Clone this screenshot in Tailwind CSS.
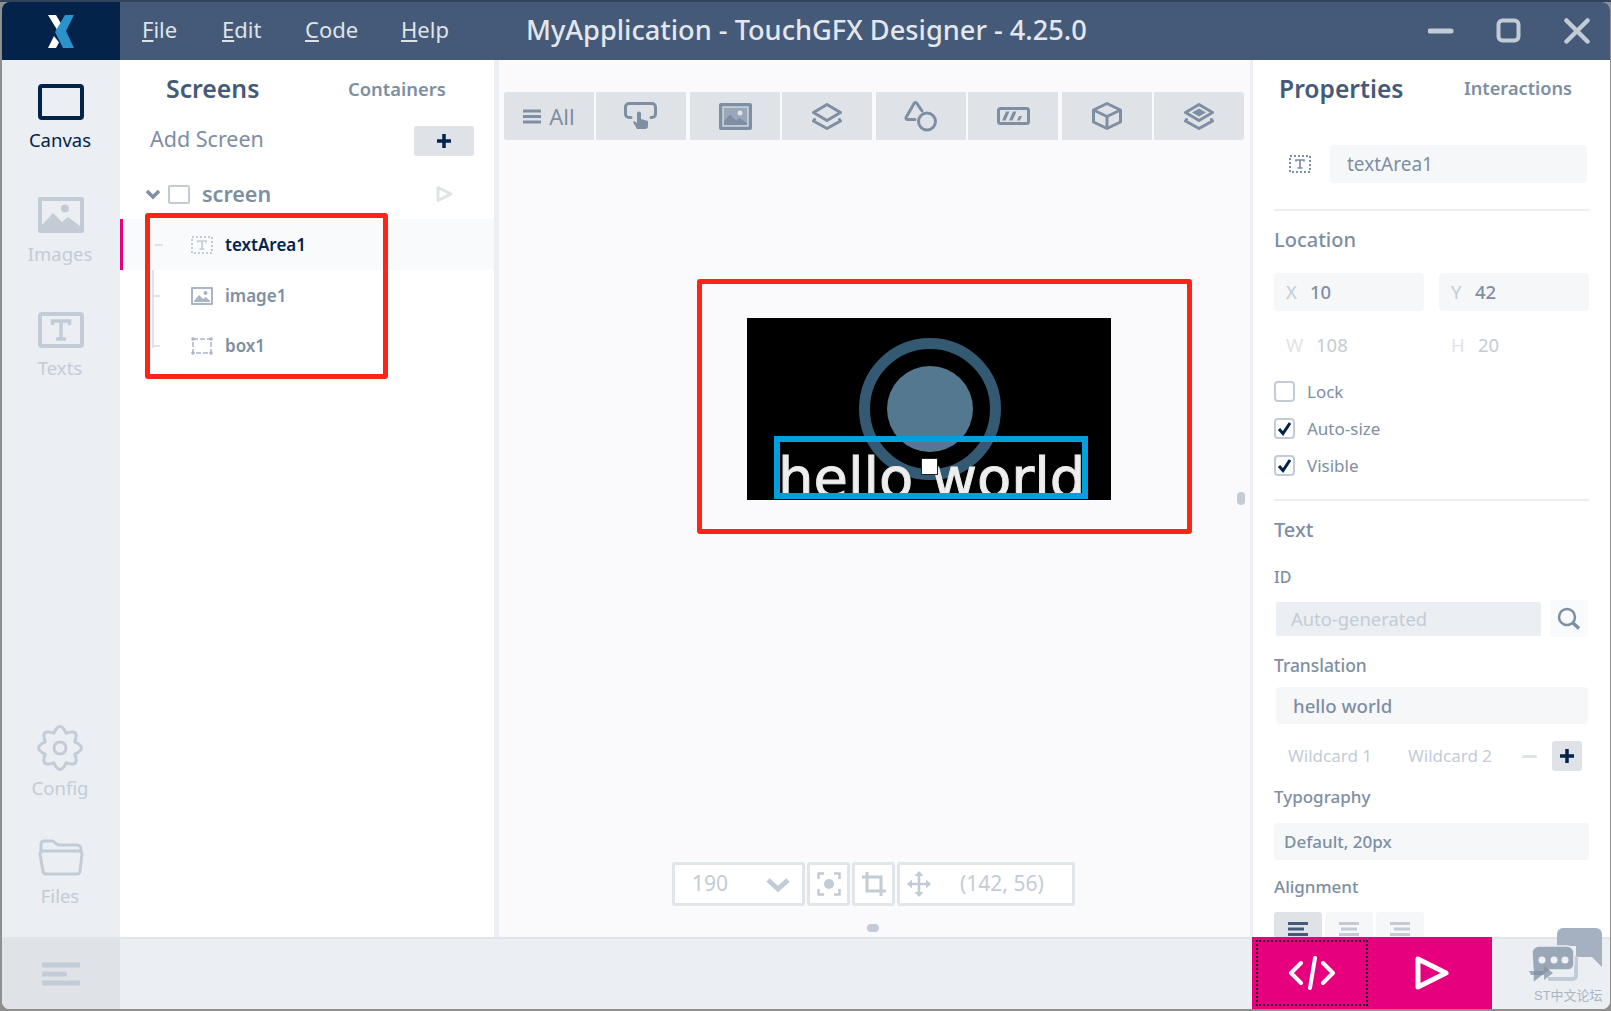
<!DOCTYPE html>
<html><head><meta charset="utf-8"><script src="https://cdn.jsdelivr.net/npm/@tailwindcss/browser@4"></script></head>
<body class="m-0 overflow-hidden bg-[#9a9a9a]">
<div class="relative w-[1611px] h-[1011px] overflow-hidden bg-[#8f8f8f] border-t-2 border-t-[#33445a] pl-[2px] pr-px pb-[2px] font-['Noto_Sans',sans-serif] text-[#7e8ea3]">
<div class="relative flex flex-col h-full overflow-hidden rounded-t-[8px] rounded-b-[8px] bg-white">

<!-- header -->
<header class="flex h-[58px] shrink-0 bg-[#455a78] text-[#dfe3e8]">
  <div class="flex w-[118px] shrink-0 items-center justify-center bg-[#03234b]">
    <svg width="26" height="33" viewBox="0 0 26 33"><path d="M0 0h8l7 12-4 6zM0 33l6-12 5 6.500L8 33z" fill="#fff"/><path d="M17 0h9l-8 16 8 17H15L7 17z" fill="#2b93cb"/></svg>
  </div>
  <nav class="flex items-center pb-[3px] pl-[22px] text-[22px] text-[#dfe3e8]">
    <span class="w-[80px]"><u class="underline-offset-2">F</u>ile</span><span class="w-[83px]"><u class="underline-offset-2">E</u>dit</span><span class="w-[96px]"><u class="underline-offset-2">C</u>ode</span><span><u class="underline-offset-2">H</u>elp</span>
  </nav>
  <div class="ml-[77px] flex items-center pb-[1px] text-[27.2px] font-medium text-[#e3e7eb]">MyApplication - TouchGFX Designer - 4.25.0</div>
  <div class="ml-auto flex items-center gap-[42px] pr-[20px]">
    <svg width="26" height="26" viewBox="0 0 26 26"><path d="M2 13h21" stroke="#c3ccd6" stroke-width="5" stroke-linecap="round"/></svg>
    <svg width="26" height="26" viewBox="0 0 26 26"><rect x="2.500" y="2.500" width="20" height="20" rx="4" fill="none" stroke="#c3ccd6" stroke-width="4"/></svg>
    <svg width="26" height="26" viewBox="0 0 26 26"><path d="M2.500 2.500l21 21M23.500 2.500l-21 21" stroke="#c3ccd6" stroke-width="4.500" stroke-linecap="round"/></svg>
  </div>
</header>

<!-- body -->
<div class="flex min-h-0 flex-1">
  <!-- sidebar -->
  <aside class="flex w-[118px] shrink-0 flex-col items-center bg-[#ebeef2] pr-[2px] pt-[24px] text-[18.5px] text-[#c3ccd6]">
    <svg class="ml-[2px]" width="46" height="36" viewBox="0 0 46 36"><rect x="2" y="2" width="42" height="32" rx="2" fill="#ebeef2" stroke="#03234b" stroke-width="4"/></svg>
    <span class="mt-[5px] leading-[30px] text-[#03234b]">Canvas</span>
    <svg class="ml-[2px] mt-[42px]" width="46" height="36" viewBox="0 0 46 36"><rect width="46" height="36" rx="2" fill="#c3ccd6"/><rect x="4" y="4" width="38" height="28" fill="#ebeef2"/><circle cx="27" cy="11.500" r="4" fill="#c3ccd6"/><path d="M4 28l11-12 9 9 6-5 12 9v3H4z" fill="#c3ccd6"/></svg>
    <span class="mt-[6px] leading-[30px]">Images</span>
    <svg class="ml-[2px] mt-[43px]" width="46" height="36" viewBox="0 0 46 36"><rect x="2" y="2" width="42" height="32" rx="2" fill="none" stroke="#c3ccd6" stroke-width="4"/><path d="M14.500 13v-4h17v4M23 9v18M18 27h10" fill="none" stroke="#c3ccd6" stroke-width="3.500"/></svg>
    <span class="mt-[5px] leading-[30px]">Texts</span>
    <div class="flex-1"></div>
    <svg width="46" height="46" viewBox="0 0 46 46" fill="none" stroke="#c3ccd6" stroke-width="3" stroke-linejoin="round"><circle cx="23" cy="23" r="6"/><path d="M37.800 16.900Q51 23 37.800 29.100Q42.800 42.800 29.100 37.800Q23 51 16.900 37.800Q3.200 42.800 8.200 29.100Q-5 23 8.200 16.900Q3.200 3.200 16.900 8.200Q23 -5 29.100 8.200Q42.800 3.200 37.800 16.900Z"/></svg>
    <span class="mt-[2px] leading-[30px]">Config</span>
    <svg class="ml-[2px] mt-[36px]" width="46" height="37" viewBox="0 0 46 37" fill="none" stroke="#c3ccd6" stroke-width="3"><path d="M3 12V5a3 3 0 0 1 3-3h8c3 0 3 4 7 4h18a4 4 0 0 1 4 4v2"/><path d="M2 15a3 3 0 0 1 3-3h36a3 3 0 0 1 3 3l-2 17a3 3 0 0 1-3 3H8a3 3 0 0 1-3-3z"/></svg>
    <span class="mb-[26px] mt-[5px] leading-[30px]">Files</span>
  </aside>

  <!-- screens panel -->
  <section class="relative w-[374px] shrink-0 bg-white">
    <div class="flex h-[49px] items-center pl-[46px] pt-[9px]">
      <span class="w-[182px] text-[24.800px] font-semibold text-[#455a78]">Screens</span>
      <span class="text-[18.400px] font-semibold text-[#7e8ea3]">Containers</span>
    </div>
    <div class="mt-[17px] flex h-[30px] items-center justify-between pl-[30px] pr-[20px]">
      <span class="pb-[3px] text-[21.500px] text-[#7e8ea3]">Add Screen</span>
      <span class="flex h-[30px] w-[60px] items-center justify-center rounded-[3px] bg-[#dfe3e8]"><svg width="16" height="16" viewBox="0 0 16 16"><path d="M8 1v14M1 8h14" stroke="#03234b" stroke-width="3.500"/></svg></span>
    </div>
    <div class="mt-[20px] flex h-[36px] items-center pl-[25px]">
      <svg width="16" height="11" viewBox="0 0 16 11"><path d="M2 2l6 6 6-6" fill="none" stroke="#7e8ea3" stroke-width="3.500"/></svg>
      <span class="ml-[7px] h-[19px] w-[22px] rounded-[2px] border-2 border-[#c3ccd6]"></span>
      <span class="ml-[12px] text-[21.500px] font-semibold text-[#7e8ea3]">screen</span>
      <svg class="ml-auto mr-[40px]" width="18" height="18" viewBox="0 0 18 18"><path d="M2 2.500v13l13-6.500z" fill="none" stroke="#dfe3e8" stroke-width="3" stroke-linejoin="round"/></svg>
    </div>
    <div class="relative mt-[7px]">
      <div class="absolute left-[32px] top-0 h-[129px] w-[10px] border-l-2 border-[#dfe3e8]"></div>
      <div class="relative flex h-[51px] items-center border-l-[3px] border-[#e6007e] bg-[#f9fafc] pl-[68px]">
        <svg width="22" height="18" viewBox="0 0 22 18" fill="none"><rect x="1" y="1" width="20" height="16" stroke="#c3ccd6" stroke-width="2" stroke-dasharray="2 2"/><path d="M7 6.500V5h8v1.500M11 5v8M8.500 13h5" stroke="#c3ccd6" stroke-width="1.700"/></svg>
        <span class="ml-[12px] text-[17px] font-semibold text-[#03234b]">textArea1</span>
        <span class="absolute left-[32px] top-[25px] h-[2px] w-[8px] bg-[#dfe3e8]"></span>
      </div>
      <div class="relative flex h-[51px] items-center pl-[71px]">
        <svg width="22" height="18" viewBox="0 0 22 18"><rect width="22" height="18" rx="1" fill="#a9b5c4"/><rect x="2" y="2" width="18" height="14" fill="#fff"/><circle cx="14.500" cy="6" r="2" fill="#a9b5c4"/><path d="M3 14l5-6 4 4 3-2 4 4v1H3z" fill="#a9b5c4"/></svg>
        <span class="ml-[12px] text-[17px] font-semibold text-[#7e8ea3]">image1</span>
        <span class="absolute left-[32px] top-[25px] h-[2px] w-[8px] bg-[#dfe3e8]"></span>
      </div>
      <div class="relative flex h-[50px] items-center pl-[71px]">
        <svg width="22" height="18" viewBox="0 0 22 18" fill="none"><rect x="2" y="2" width="18" height="14" stroke="#a9b5c4" stroke-width="1.500" stroke-dasharray="5 2"/><circle cx="2" cy="2" r="1.800" fill="#a9b5c4"/><circle cx="20" cy="2" r="1.800" fill="#a9b5c4"/><circle cx="2" cy="16" r="1.800" fill="#a9b5c4"/><circle cx="20" cy="16" r="1.800" fill="#a9b5c4"/></svg>
        <span class="ml-[12px] text-[17px] font-semibold text-[#7e8ea3]">box1</span>
        <span class="absolute left-[32px] top-[24px] h-[2px] w-[8px] bg-[#dfe3e8]"></span>
      </div>
    </div>
  </section>
  <div class="w-[5px] shrink-0 bg-[#ebeef2]"></div>

  <!-- canvas -->
  <main class="relative w-[751px] shrink-0 bg-[#fafafc]">
    <div class="ml-[5px] mt-[32px] flex h-[48px] w-[740px] overflow-hidden rounded-[3px] text-[#7e8ea3]">
      <div class="flex w-[90px] items-center justify-center gap-[8px] bg-[#dfe3e8] text-[22px]"><svg width="18" height="15" viewBox="0 0 18 15"><path d="M0 2h18M0 7.500h18M0 13h18" stroke="#7e8ea3" stroke-width="3"/></svg>All</div>
      <div class="ml-[2px] flex w-[90px] items-center justify-center bg-[#dfe3e8]"><svg width="34" height="28" viewBox="0 0 34 28" fill="none" stroke="#7e8ea3" stroke-width="3" stroke-linecap="round"><path d="M7 15.500H5A3.500 3.500 0 0 1 1.500 12V5A3.500 3.500 0 0 1 5 1.500h23A3.500 3.500 0 0 1 31.500 5v7a3.500 3.500 0 0 1-3.500 3.500h-1"/><path d="M13 11.500a2 2 0 0 1 4 0v5.500l7 2v5a3 3 0 0 1-3 3h-8l-4-7 1-1 3 2z" fill="#7e8ea3" stroke="none"/></svg></div>
      <div class="ml-[4px] flex w-[90px] items-center justify-center bg-[#dfe3e8]"><svg width="33" height="27" viewBox="0 0 33 27"><rect width="33" height="27" rx="2" fill="#7e8ea3"/><rect x="4" y="4" width="25" height="19" fill="#9aa7b8" stroke="#dfe3e8" stroke-width="1.200"/><circle cx="21" cy="10" r="2.500" fill="#dfe3e8"/><path d="M5 22v-4l6-6.500 6 6 3.500-2.500 7.500 5v2z" fill="#7e8ea3"/></svg></div>
      <div class="ml-[2px] flex w-[90px] items-center justify-center bg-[#dfe3e8]"><svg width="30" height="27" viewBox="0 0 30 27" fill="none" stroke="#7e8ea3" stroke-width="3" stroke-linejoin="round" stroke-linecap="round"><path d="M15 1.500l13.500 8-13.500 8-13.500-8z"/><path d="M2.500 16.500L1.500 18l13.500 7.500L28.500 18l-1-1.500"/></svg></div>
      <div class="ml-[4px] flex w-[90px] items-center justify-center bg-[#dfe3e8]"><svg width="34" height="31" viewBox="0 0 34 31" fill="none" stroke="#7e8ea3" stroke-width="3" stroke-linejoin="round" stroke-linecap="round"><path d="M11 18.500H3.500a1.500 1.500 0 0 1-1.300-2.300L10 2.500a1.700 1.700 0 0 1 3 0l5 7.500"/><circle cx="23" cy="20.500" r="8.500"/></svg></div>
      <div class="ml-[2px] flex w-[90px] items-center justify-center bg-[#dfe3e8]"><svg width="33" height="18" viewBox="0 0 33 18"><rect x="1.500" y="1.500" width="30" height="15" rx="2" fill="none" stroke="#7e8ea3" stroke-width="3"/><path d="M5 13.500l4-9h3.500l-4 9zM12 13.500l4-9h3.500l-4 9zM20 13.500l2-4.500h3l-2 4.500z" fill="#7e8ea3"/></svg></div>
      <div class="ml-[4px] flex w-[90px] items-center justify-center bg-[#dfe3e8]"><svg width="30" height="28" viewBox="0 0 30 28" fill="none" stroke="#7e8ea3" stroke-width="3" stroke-linejoin="round"><path d="M15 1.500l13.500 6.500v12l-13.500 6.500-13.500-6.500V8z"/><path d="M1.500 8L15 14.500 28.500 8M15 14.500v12"/></svg></div>
      <div class="ml-[2px] flex w-[90px] items-center justify-center bg-[#dfe3e8]"><svg width="30" height="27" viewBox="0 0 30 27" fill="none" stroke="#7e8ea3" stroke-width="3" stroke-linejoin="round" stroke-linecap="round"><path d="M15 1.500l13.500 8-13.500 8-13.500-8z"/><path d="M15 5.500l7 4-7 4-7-4z" fill="#7e8ea3" stroke="none"/><path d="M2.500 16.500L1.500 18l13.500 7.500L28.500 18l-1-1.500"/></svg></div>
    </div>

    <!-- preview: a free canvas with a red annotation round it -->
    <div class="absolute left-[198px] top-[219px] h-[255px] w-[495px] rounded-[3px] border-[5px] border-[#ff2417]"></div>
    <div class="absolute left-[248px] top-[258px] h-[182px] w-[364px] overflow-hidden bg-black">
      <div class="absolute left-[112px] top-[20px] h-[142px] w-[142px] rounded-full border-[11px] border-[#335a72]"></div>
      <div class="absolute left-[140px] top-[48px] h-[86px] w-[86px] rounded-full bg-[#54788f]"></div>
      <div class="absolute left-[27px] top-[118px] h-[63px] w-[314px] overflow-hidden border-[6px] border-[#00a0dc]">
        <span class="absolute left-[-2px] top-[-4px] whitespace-nowrap font-['DejaVu_Sans',sans-serif] text-[56px] leading-[80px] text-[#eeeeee] [-webkit-text-stroke:1px_#e8e8e8] [filter:blur(0.7px)]">hello world</span>
      </div>
      <div class="absolute left-[174px] top-[140px] h-[17px] w-[17px] border border-[#222] bg-white"></div>
    </div>
    <div class="absolute left-[738px] top-[432px] h-[13px] w-[8px] rounded-full bg-[#c3ccd6]"></div>

    <!-- zoom bar -->
    <div class="absolute left-[173px] top-[802px] flex h-[44px] gap-[2px] text-[21px] text-[#c3ccd6]">
      <div class="flex w-[133px] items-center justify-between rounded-[3px] border-[3px] border-[#e0e5ea] bg-white pl-[17px] pr-[12px]">190<svg width="24" height="15" viewBox="0 0 24 15"><path d="M2 3l10 9 10-9" fill="none" stroke="#c3ccd6" stroke-width="5"/></svg></div>
      <div class="flex w-[43px] items-center justify-center rounded-[3px] border-[3px] border-[#e0e5ea] bg-white"><svg width="24" height="24" viewBox="0 0 24 24" fill="none" stroke="#c3ccd6" stroke-width="2.500"><path d="M1.500 7V1.500H7M17 1.500h5.500V7M22.500 17v5.500H17M7 22.500H1.500V17"/><circle cx="12" cy="12" r="5" fill="#c3ccd6" stroke="none"/></svg></div>
      <div class="flex w-[43px] items-center justify-center rounded-[3px] border-[3px] border-[#e0e5ea] bg-white"><svg width="24" height="24" viewBox="0 0 24 24" fill="none" stroke="#c3ccd6" stroke-width="3"><path d="M5 0v19h19M0 5h19v19"/></svg></div>
      <div class="flex w-[178px] items-center rounded-[3px] border-[3px] border-[#e0e5ea] bg-white pl-[7px]"><svg width="24" height="26" viewBox="0 0 24 26"><path d="M12 1v24M1 13h22" stroke="#c3ccd6" stroke-width="2.500"/><path d="M12 0l4.500 5h-9zM12 26l4.500-5h-9zM0 13l5-4.500v9zM24 13l-5-4.500v9z" fill="#c3ccd6"/></svg><span class="ml-[29px]">(142, 56)</span></div>
    </div>
    <div class="absolute left-[368px] top-[864px] h-[8px] w-[12px] rounded-full bg-[#c3ccd6]"></div>
  </main>

  <!-- properties -->
  <aside class="min-w-0 flex-1 border-l-[3px] border-[#ebeef2] bg-white pl-[21px] pr-[21px] text-[#7e8ea3]">
    <div class="flex h-[49px] items-center pl-[5px] pt-[9px]">
      <span class="w-[185px] text-[24.600px] font-semibold text-[#455a78]">Properties</span>
      <span class="text-[18.200px] font-semibold">Interactions</span>
    </div>
    <div class="mt-[36px] flex h-[38px] items-center pr-[2px]">
      <svg class="ml-[15px]" width="22" height="18" viewBox="0 0 22 18" fill="none"><rect x="1" y="1" width="20" height="16" stroke="#7e8ea3" stroke-width="2" stroke-dasharray="2 2"/><path d="M7 6.500V5h8v1.500M11 5v8M8.500 13h5" stroke="#7e8ea3" stroke-width="1.700"/></svg>
      <span class="ml-[19px] flex h-[38px] flex-1 items-center rounded-[4px] bg-[#f5f7f9] pl-[17px] text-[19px]">textArea1</span>
    </div>
    <div class="mt-[26px] h-[2px] bg-[#ebeef2]"></div>
    <div class="mt-[14px] text-[20px] font-medium leading-[30px]">Location</div>
    <div class="mt-[18px] flex gap-[15px] text-[18.500px] font-medium">
      <div class="flex h-[38px] w-[150px] items-center rounded-[4px] bg-[#f5f7f9] pl-[12px]"><span class="w-[24px] font-normal text-[#c3ccd6]">X</span>10</div>
      <div class="flex h-[38px] w-[150px] items-center rounded-[4px] bg-[#f5f7f9] pl-[12px]"><span class="w-[24px] font-normal text-[#c3ccd6]">Y</span>42</div>
    </div>
    <div class="mt-[15px] flex h-[38px] text-[18.500px] text-[#dfe3e8]">
      <div class="flex w-[165px] items-center pl-[12px]"><span class="w-[30px]">W</span><span class="text-[#c3ccd6]">108</span></div>
      <div class="flex items-center pl-[12px]"><span class="w-[27px]">H</span><span class="text-[#c3ccd6]">20</span></div>
    </div>
    <div class="mt-[9px] flex h-[37px] items-center text-[17px]"><span class="h-[21px] w-[21px] rounded-[4px] border-2 border-[#c3ccd6]"></span><span class="ml-[12px]">Lock</span></div>
    <div class="flex h-[37px] items-center text-[17px]"><span class="flex h-[21px] w-[21px] items-center justify-center rounded-[4px] border-2 border-[#c3ccd6]"><svg width="15" height="15" viewBox="0 0 15 15"><path d="M2 8l4 4.500L13 2" fill="none" stroke="#03234b" stroke-width="3"/></svg></span><span class="ml-[12px]">Auto-size</span></div>
    <div class="flex h-[37px] items-center text-[17px]"><span class="flex h-[21px] w-[21px] items-center justify-center rounded-[4px] border-2 border-[#c3ccd6]"><svg width="15" height="15" viewBox="0 0 15 15"><path d="M2 8l4 4.500L13 2" fill="none" stroke="#03234b" stroke-width="3"/></svg></span><span class="ml-[12px]">Visible</span></div>
    <div class="mt-[15px] h-[2px] bg-[#ebeef2]"></div>
    <div class="mt-[14px] text-[20px] font-medium leading-[30px]">Text</div>
    <div class="mt-[20px] text-[16px] font-medium leading-[24px]">ID</div>
    <div class="mt-[11px] flex h-[37px] items-center pl-[2px] pr-px">
      <span class="flex h-[34px] w-[265px] items-center rounded-[2px] bg-[#ebeef2] pl-[15px] text-[18.400px] text-[#c3ccd6]">Auto-generated</span>
      <span class="ml-[9px] flex h-[37px] w-[38px] items-center justify-center rounded-[4px] bg-[#f9fafc]"><svg width="24" height="24" viewBox="0 0 24 24" fill="none" stroke="#7e8ea3"><circle cx="10" cy="10" r="8" stroke-width="2.500"/><path d="M16 16l6 5.500" stroke-width="3.500"/></svg></span>
    </div>
    <div class="mt-[16px] text-[17.400px] font-medium leading-[24px]">Translation</div>
    <div class="ml-[2px] mr-px mt-[10px] flex h-[37px] items-center rounded-[4px] bg-[#f5f7f9] pl-[17px] text-[18.600px] font-medium">hello world</div>
    <div class="mt-[17px] flex h-[30px] items-center pl-[14px] text-[17px] text-[#c3ccd6]">
      <span class="w-[120px]">Wildcard 1</span><span class="w-[114px]">Wildcard 2</span>
      <span class="h-[3px] w-[15px] rounded bg-[#dfe3e8]"></span>
      <span class="ml-[15px] flex h-[30px] w-[30px] items-center justify-center rounded-[3px] bg-[#dfe3e8]"><svg width="16" height="16" viewBox="0 0 16 16"><path d="M8 1v14M1 8h14" stroke="#03234b" stroke-width="3.500"/></svg></span>
    </div>
    <div class="mt-[14px] text-[17px] font-medium leading-[24px]">Typography</div>
    <div class="mt-[14px] flex h-[37px] items-center rounded-[4px] bg-[#f5f7f9] pl-[10px] text-[17px] font-medium">Default, 20px</div>
    <div class="mt-[15px] text-[17px] font-medium leading-[24px]">Alignment</div>
    <div class="mt-[13px] flex gap-[3px]">
      <div class="flex h-[40px] w-[48px] justify-center rounded-t-[3px] bg-[#dfe3e8] pt-[10px]"><svg width="20" height="14" viewBox="0 0 20 14"><path d="M0 1.500h20M0 7h16M0 12.500h20" stroke="#455a78" stroke-width="3"/></svg></div>
      <div class="flex h-[40px] w-[48px] justify-center rounded-t-[3px] bg-[#f5f7f9] pt-[10px]"><svg width="20" height="14" viewBox="0 0 20 14"><path d="M0 1.500h20M2 7h16M0 12.500h20" stroke="#c3ccd6" stroke-width="3"/></svg></div>
      <div class="flex h-[40px] w-[48px] justify-center rounded-t-[3px] bg-[#f5f7f9] pt-[10px]"><svg width="20" height="14" viewBox="0 0 20 14"><path d="M0 1.500h20M4 7h16M0 12.500h20" stroke="#c3ccd6" stroke-width="3"/></svg></div>
    </div>
  </aside>
</div>

<!-- bottom bar -->
<footer class="relative z-10 flex h-[72px] shrink-0 border-t-2 border-[#e0e5ea] bg-[#ebeef2]">
  <div class="flex w-[118px] items-center justify-center bg-[#dfe3e8]"><svg width="38" height="24" viewBox="0 0 38 24"><path d="M1.500 3h35M1.500 12h21M1.500 21h35" stroke="#c3ccd6" stroke-width="5" stroke-linecap="round"/></svg></div>
  <div class="-mt-[2px] ml-[1132px] flex w-[240px] bg-[#e6007e]">
    <div class="my-[3px] ml-[4px] flex w-[112px] items-center justify-center border-2 border-dotted border-[#222]"><svg width="48" height="34" viewBox="0 0 48 34" fill="none" stroke="#fff" stroke-width="4" stroke-linecap="round" stroke-linejoin="round"><path d="M13 7L3 17l10 10M35 7l10 10-10 10M27 2l-5 30"/></svg></div>
    <div class="flex flex-1 items-center justify-center pl-[4px]"><svg width="36" height="36" viewBox="0 0 36 36" fill="none"><path d="M4 4v28l28-14z" stroke="#fff" stroke-width="5" stroke-linejoin="round"/></svg></div>
  </div>
</footer>

<!-- forum watermark -->
<div class="pointer-events-none absolute left-[1526px] top-[924px] z-20 h-[84px] w-[80px]">
  <svg class="absolute left-0 top-0" width="78" height="62" viewBox="0 0 78 62">
    <path d="M29 20V8a6 6 0 0 1 6-6h33a6 6 0 0 1 6 6v33L64 31H48V20z" fill="#a5b1c1"/>
    <path d="M48 30v20a3 3 0 0 1-3 3H20" fill="none" stroke="#c3ccd6" stroke-width="4"/>
    <path d="M4 27a7 7 0 0 1 7-7h28a7 7 0 0 1 7 7v11a6 6 0 0 1-6 6H22L5 57V44z" fill="#9aa7b8" stroke="#ebeef2" stroke-width="1.500"/>
    <path d="M1 45h15v-5l9 7-9 7v-5H3z" fill="#7e8ea3" opacity="0.7"/>
    <circle cx="14" cy="34" r="3.500" fill="#eef1f4"/><circle cx="26" cy="34" r="3.500" fill="#eef1f4"/><circle cx="37" cy="34" r="3.500" fill="#eef1f4"/>
  </svg>
  <span class="absolute left-[6px] top-[61px] whitespace-nowrap font-['Liberation_Sans','Noto_Sans_CJK_SC',sans-serif] text-[13px] leading-[18px] text-[#a9b5c4]">ST中文论坛</span>
</div>
</div>

<!-- red annotation over the tree -->
<div class="absolute left-[145px] top-[211px] h-[166px] w-[243px] rounded-[3px] border-[5px] border-[#ff2417]"></div>
</div>
</body></html>
